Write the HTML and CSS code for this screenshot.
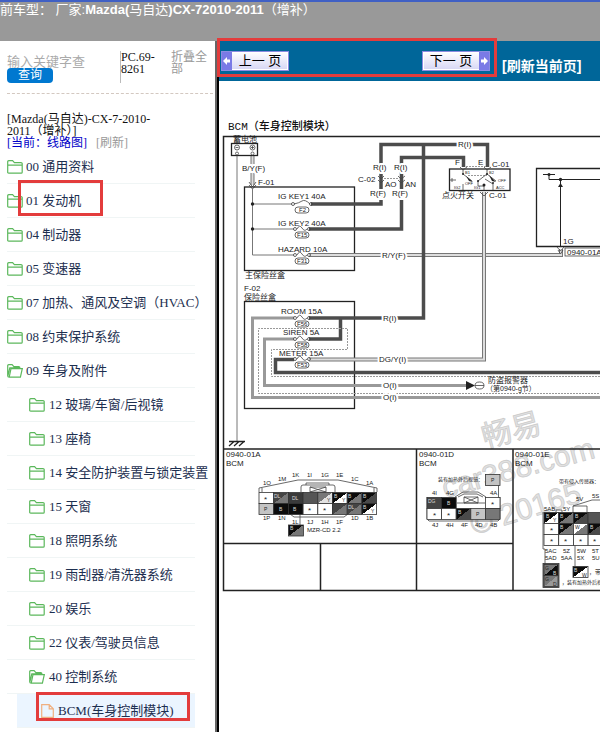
FILE: index.html
```html
<!DOCTYPE html>
<html lang="zh-CN">
<head>
    <meta charset="UTF-8">
    <title>线路图</title>
    <link rel="stylesheet" href="styles.css">
</head>
<body>
<svg class="defs" width="0" height="0">
    <symbol id="folder" viewBox="0 0 16 14">
        <path d="M.7 12.2V1.7Q.7.7 1.7.7H5.6L7.4 2.6H14Q15.2 2.6 15.2 3.6V12.2Q15.2 13.2 14.2 13.2H1.7Q.7 13.2.7 12.2ZM.7 5.1H15.2"/>
    </symbol>
    <symbol id="folder-open" viewBox="0 0 16 14">
        <path d="M2.2 13.2Q.7 13.2.7 11.8V1.7Q.7.7 1.7.7H5.1L6.9 2.6H12Q13 2.6 13 4.6M2.2 13.2L4 4.7H15.3L13.4 13.2ZM1 11.5L2.8 3.8H13"/>
    </symbol>
    <symbol id="file" viewBox="0 0 13 14">
        <path d="M.7.7H8.2L12.3 4.8V13.3H.7ZM8.2.7V4.8H12.3"/>
    </symbol>
</svg>
<header class="top">前车型： 厂家:<b>Mazda(</b>马自达<b>)CX-72010-2011</b>（增补）</header>
<div class="wrap">
    <div class="side">
        <form class="search">
            <div class="search-box">
                <input type="text" class="key" placeholder="输入关键字查" aria-label="关键字">
                <button type="button" class="query">查询</button>
            </div>
            <div class="code">PC.69-8261</div>
            <a href="#" class="fold">折叠全部</a>
        </form>
        <div class="car">
            <p>[Mazda(马自达)-CX-7-2010-2011（增补）]</p>
            <a href="#" class="now">[当前：线路图]</a>
            <a href="#" class="reload">[刷新]</a>
        </div>
        <ul class="tree">
            <li><a href="#"><svg class="ico"><use href="#folder"/></svg>00 通用资料</a></li>
            <li><a href="#" class="mark mark-engine"><svg class="ico"><use href="#folder"/></svg>01 发动机</a></li>
            <li><a href="#"><svg class="ico"><use href="#folder"/></svg>04 制动器</a></li>
            <li><a href="#"><svg class="ico"><use href="#folder"/></svg>05 变速器</a></li>
            <li><a href="#"><svg class="ico"><use href="#folder"/></svg>07 加热、通风及空调（HVAC）</a></li>
            <li><a href="#"><svg class="ico"><use href="#folder"/></svg>08 约束保护系统</a></li>
            <li><a href="#"><svg class="ico"><use href="#folder-open"/></svg>09 车身及附件</a>
                <ul class="sub">
                    <li><a href="#"><svg class="ico"><use href="#folder"/></svg>12 玻璃/车窗/后视镜</a></li>
                    <li><a href="#"><svg class="ico"><use href="#folder"/></svg>13 座椅</a></li>
                    <li><a href="#"><svg class="ico"><use href="#folder"/></svg>14 安全防护装置与锁定装置</a></li>
                    <li><a href="#"><svg class="ico"><use href="#folder"/></svg>15 天窗</a></li>
                    <li><a href="#"><svg class="ico"><use href="#folder"/></svg>18 照明系统</a></li>
                    <li><a href="#"><svg class="ico"><use href="#folder"/></svg>19 雨刮器/清洗器系统</a></li>
                    <li><a href="#"><svg class="ico"><use href="#folder"/></svg>20 娱乐</a></li>
                    <li><a href="#"><svg class="ico"><use href="#folder"/></svg>22 仪表/驾驶员信息</a></li>
                    <li><a href="#"><svg class="ico"><use href="#folder-open"/></svg>40 控制系统</a>
                        <ul class="leaf">
                            <li><a href="#" class="mark mark-bcm"><svg class="ico ico-file"><use href="#file"/></svg>BCM(车身控制模块)</a></li>
                        </ul>
                    </li>
                </ul>
            </li>
        </ul>
    </div>
    <div class="main">
        <div class="bar">
            <div class="pager mark">
                <button type="button" class="page prev"><svg class="arrow" viewBox="0 0 10 18"><path d="M1 9L5 5V7.500H8V10.500H5V13Z"/></svg><span>上一 页</span></button>
                <button type="button" class="page next"><span>下一 页</span><svg class="arrow" viewBox="0 0 10 18"><path d="M9 9L5 5V7.500H2V10.500H5V13Z"/></svg></button>
            </div>
            <a href="#" class="refresh">[刷新当前页]</a>
        </div>
        <h1 class="title">BCM（车身控制模块）</h1>
        <svg class="diagram" width="700" height="590" viewBox="219 134 700 590">
            <defs>
                <linearGradient id="bw" x2="1" y2="1"><stop offset=".5" stop-color="#0c0c0c"/><stop offset=".5" stop-color="#fff"/></linearGradient>
                <linearGradient id="bg" x2="1" y2="1"><stop offset=".5" stop-color="#0c0c0c"/><stop offset=".5" stop-color="#777"/></linearGradient>
                <linearGradient id="bd" x2="1" y2="1"><stop offset=".5" stop-color="#0c0c0c"/><stop offset=".5" stop-color="#4a4a4a"/></linearGradient>
                <linearGradient id="dg" x2="1" y2="1"><stop offset=".5" stop-color="#444"/><stop offset=".5" stop-color="#777"/></linearGradient>
                <linearGradient id="gb" x2="1" y2="1"><stop offset=".5" stop-color="#777"/><stop offset=".5" stop-color="#0c0c0c"/></linearGradient>
                <linearGradient id="gg" x2="1" y2="1"><stop offset=".5" stop-color="#777"/><stop offset=".5" stop-color="#999"/></linearGradient>
                <linearGradient id="gw" x2="1" y2="1"><stop offset=".5" stop-color="#777"/><stop offset=".5" stop-color="#e2e2e2"/></linearGradient>
                <linearGradient id="wg" x2="1" y2="1"><stop offset=".5" stop-color="#fff"/><stop offset=".5" stop-color="#777"/></linearGradient>
                <g id="fuse"><path d="M-8 0Q-3 -1 0 -3T8 0"/><circle cx="-9" r="1.5"/><circle cx="9" r="1.5"/><rect x="-7" y="3" width="14" height="6" rx="3"/></g>
                <g id="fuse-s"><path d="M-5 0Q-2.500 -5 0 -1T5 0"/><circle cx="-7" r="1.500"/><circle cx="7" r="1.500"/><rect x="-7" y="3" width="14" height="6" rx="3"/></g>
            </defs>

            <!-- watermark -->
            <g class="water">
                <text transform="translate(485 448) rotate(-15)">畅易</text>
                <text transform="translate(445 498) rotate(-15)">car388.com</text>
                <text transform="translate(474 535) rotate(-17)">© 20165</text>
            </g>

            <!-- frame and table -->
            <path class="frame" d="M920 136.500H223.500V590.500H920M223.500 449H920M223.500 543.500H513M320.500 543.500V590.500M416.500 449V590.500M513 449V590.500"/>

            <!-- battery -->
            <text class="t8" x="233" y="142">蓄电池</text>
            <path class="thin" d="M237 155V441"/>
            <path class="dbl" d="M252.500 155V185"/><path class="dbl-in" d="M252.500 155V185"/>
            <g class="box"><rect x="231.500" y="143.500" width="26" height="12"/></g>
            <g class="fine"><circle cx="237" cy="147.500" r="2.500"/><circle cx="252.500" cy="147.500" r="2.500"/><circle cx="237" cy="153.500" r="1.500"/><circle cx="252.500" cy="153.500" r="1.500"/>
                <path d="M235.500 147.500H238.500M251 147.500H254M252.500 146V149M249 182L252.500 187L256 182M249 185L252.500 189L256 185"/></g>
            <path class="ground" d="M229 441.500H245M234 441.500L229 446M239 441.500L234 446M244 441.500L239 446"/>
            <text class="t8 gap" x="242" y="171">B/Y(F)</text>
            <text class="t8" x="258" y="185">F-01</text>

            <!-- main fuse box -->
            <g class="box"><rect x="244.500" y="187" width="110" height="83.500"/><rect x="244.500" y="301.500" width="110" height="107"/></g>
            <path class="thin" d="M252.500 187V255H294M252.500 204H292M252.500 229H294"/>
            <circle cx="252.500" cy="204" r="1.700"/><circle cx="252.500" cy="229" r="1.700"/>
            <path class="thick" d="M311 204H381V144.500H487.500V167M309 229H401.500V157.500H463.500V167"/>
            <path class="dbl" d="M309 255H561V249"/><path class="dbl-in" d="M309 255H561V249"/>
            <g class="fine"><use href="#fuse" x="302" y="204"/><use href="#fuse-s" x="302" y="229"/><use href="#fuse-s" x="302" y="255"/></g>
            <text class="t8" x="278" y="199">IG KEY1 40A</text>
            <text class="t8" x="278" y="226">IG KEY2 40A</text>
            <text class="t8" x="278" y="252">HAZARD 10A</text>
            <text class="t6" x="299" y="212">F2</text><text class="t6" x="297" y="237">F15</text><text class="t6" x="297" y="263">F31</text>
            <text class="t8" x="245" y="278">主保险丝盒</text>
            <path class="dash" d="M384 178.500H399"/>
            <g class="fine"><path d="M378 176L381 179L384 176M378 180L381 183L384 180M398 176L401 179L405 176M398 180L401 183L405 180"/></g>
            <text class="t8" x="358" y="182">C-02</text>
            <text class="t8 gap" x="373" y="170">R(I)</text><text class="t8 gap" x="394" y="170">R(I)</text>
            <text class="t8 gap" x="370" y="196">R(F)</text><text class="t8 gap" x="392" y="196">R(F)</text>
            <text class="t8" x="385" y="187">AO</text><text class="t8" x="405" y="187">AN</text>
            <text class="t8 gap" x="382" y="258">R/Y(F)</text>
            <text class="t8 gap" x="458" y="147">R(I)</text>

            <!-- lower fuse box -->
            <text class="t8" x="244" y="291">F-02</text>
            <text class="t8" x="244" y="300">保险丝盒</text>
            <path class="grey" d="M294 318H252.500V397.500H920M294 339H264.500V385.500H468"/>
            <path class="thick" d="M309 318H423.500V144.500M309 339H340.500V318M294 359.500H275.500V372.500H920"/>
            <path class="dbl" d="M309 359.500H484V192"/><path class="dbl-in" d="M309 359.500H484V192"/>
            <path class="dash" d="M920 393.500H258.500V328.500H347.500V349.500H271.500V376.500H920"/>
            <g class="fine"><use href="#fuse-s" x="302" y="318"/><use href="#fuse-s" x="302" y="339"/><use href="#fuse-s" x="302" y="359"/></g>
            <text class="t8" x="281" y="314">ROOM 15A</text>
            <text class="t8" x="283" y="335">SIREN 5A</text>
            <text class="t8" x="279" y="356">METER 15A</text>
            <text class="t6" x="297" y="326">F56</text><text class="t6" x="297" y="347">F58</text><text class="t6" x="297" y="367">F53</text>
            <text class="t8 gap" x="383" y="321">R(I)</text>
            <text class="t8 gap" x="379" y="362">DG/Y(I)</text>
            <text class="t8 gap" x="383" y="388">O(I)</text>
            <text class="t8 gap" x="383" y="400">O(I)</text>
            <path d="M466 381V390L475 385.500Z"/>
            <g class="fine"><ellipse cx="479.500" cy="385.500" rx="4.500" ry="3.500"/><path d="M475 385.500H484"/></g>
            <text class="t8" x="488" y="383">防盗报警器</text>
            <text class="t7" x="486" y="391">（第0940-g节）</text>

            <!-- ignition switch -->
            <g class="box"><rect x="449.500" y="169" width="60.500" height="21.500"/></g>
            <path class="dash" d="M466 166.500H486M468 175.500H487"/>
            <g class="fine"><path d="M463 169V174L472 181M487 169V174L496 181M463 190V184M487 174L478 181V186H484V190M485 179L493 184V190M450 180H456M460 167L463 170L467 167M484 167L487 170L491 167M480 192L484 196L488 192M452 178V182"/></g>
            <path d="M466 176L473 182L469 181ZM489 175L496 182L492 181Z"/><circle cx="463" cy="174" r="1"/><circle cx="487" cy="174" r="1"/><circle cx="484" cy="185" r="1.500"/><circle cx="478" cy="181" r="1"/><circle cx="493" cy="183" r="1"/>
            <text class="t4" x="465" y="174">B1</text><text class="t4" x="489" y="174">B2</text><text class="t4" x="465" y="185">OFF</text><text class="t4" x="498" y="182">OFF</text><text class="t4" x="454" y="189">IG2</text><text class="t4" x="474" y="189">IG1</text><text class="t4" x="496" y="189">ACC</text>
            <text class="t8" x="455" y="165">F</text><text class="t8" x="478" y="165">E</text>
            <text class="t8" x="492" y="167">C-01</text><text class="t8" x="489" y="198">C-01</text>
            <text class="t8" x="442" y="198">点火开关</text>

            <!-- bcm unit -->
            <g class="box"><path d="M920 168.500H536.500V246.500H920"/></g>
            <path class="wire" d="M543 174.500H555M549 174.500V179.500H920M560.500 179.500V246"/>
            <circle cx="549" cy="174.500" r="1.500"/><circle cx="560.500" cy="179.500" r="1.700"/><path d="M558 187H563L560.500 183Z"/>
            <g class="fine"><path d="M557 247L560.500 251L564 247M558 250L560.500 254L563 250"/><rect x="565" y="248" width="40" height="8"/></g>
            <text class="t8" x="563" y="244">1G</text>
            <text class="t8" x="567" y="255">0940-01A</text>

            <!-- connector 0940-01A -->
            <text class="t8" x="226" y="457">0940-01A</text><text class="t8" x="226" y="466">BCM</text>
            <g class="fine">
                <path d="M259 492V488L298 480H338L377 488V492M262 492V488M374 492V488M290 514L294 517H344L348 514M300 508V525M301 492V487Q301 485 303 485H333Q335 485 335 487V492M306 485V483H329V485M310 487H326V492H310ZM310 487L326 492M326 487L310 492"/>
            </g>
            <g class="cells">
                <rect x="259" y="492.500" width="14.700" height="11" fill="#fff"/><rect x="273.700" y="492.500" width="14.700" height="11" fill="url(#dg)"/><rect x="288.400" y="492.500" width="14.700" height="11" fill="#3a3a3a"/><rect x="303.100" y="492.500" width="14.700" height="11" fill="#555"/><rect x="317.800" y="492.500" width="14.700" height="11" fill="url(#gw)"/><rect x="332.500" y="492.500" width="14.700" height="11" fill="url(#bw)"/><rect x="347.200" y="492.500" width="14.700" height="11" fill="url(#bg)"/><rect x="361.900" y="492.500" width="14.700" height="11" fill="url(#bd)"/>
                <rect x="259" y="503.500" width="14.700" height="11" fill="#c4c4c4"/><rect x="273.700" y="503.500" width="14.700" height="11" fill="#0c0c0c"/><rect x="288.400" y="503.500" width="14.700" height="11" fill="#0c0c0c"/><rect x="303.100" y="503.500" width="14.700" height="11" fill="#fff"/><rect x="317.800" y="503.500" width="14.700" height="11" fill="#fff"/><rect x="332.500" y="503.500" width="14.700" height="11" fill="url(#dg)"/><rect x="347.200" y="503.500" width="14.700" height="11" fill="url(#dg)"/><rect x="361.900" y="503.500" width="14.700" height="11" fill="url(#bw)"/>
                <rect x="288.500" y="525" width="15" height="11" fill="url(#bg)"/>
            </g>
            <text class="t8" x="264" y="502">*</text><text class="t8" x="308" y="513">*</text><text class="t8" x="323" y="513">*</text>
            <text class="t5" x="264" y="511">P</text><text class="t5" x="327" y="502">Y</text><text class="t5" x="342" y="502">Y</text><text class="t5" x="371" y="513">Y</text>
            <g class="inv"><text class="t5" x="274" y="498">DL</text><text class="t5" x="292" y="500">DL</text><text class="t5" x="279" y="511">B</text><text class="t5" x="293" y="511">B</text><text class="t5" x="334" y="498">B</text><text class="t5" x="348" y="498">B</text><text class="t5" x="363" y="498">B</text><text class="t5" x="348" y="509">DL</text><text class="t5" x="363" y="509">B</text><text class="t5" x="290" y="530">B</text></g>
            <text class="t6" x="263" y="485">1O</text><text class="t6" x="278" y="481">1M</text><text class="t6" x="292" y="477">1K</text><text class="t6" x="307" y="477">1I</text><text class="t6" x="321" y="477">1G</text><text class="t6" x="336" y="477">1E</text><text class="t6" x="351" y="481">1C</text><text class="t6" x="366" y="485">1A</text>
            <text class="t6" x="263" y="520">1P</text><text class="t6" x="278" y="520">1N</text><text class="t6" x="292" y="524">1L</text><text class="t6" x="307" y="524">1J</text><text class="t6" x="321" y="524">1H</text><text class="t6" x="336" y="524">1F</text><text class="t6" x="351" y="520">1D</text><text class="t6" x="366" y="520">1B</text>
            <text class="t6" x="307" y="532">MZR-CD 2.2</text>

            <!-- connector 0940-01D -->
            <text class="t8" x="419" y="457">0940-01D</text><text class="t8" x="419" y="466">BCM</text>
            <text class="t5" x="438" y="481">装有加热外后视镜：</text>
            <g class="fine"><path d="M427 497V519L429 521H498L500 519V497M455 497L463 492H478L486 497M458 497L464 494H477L483 497M457 503H485M464 497H478V503H464ZM464 497L478 503M478 497L464 503M498.500 485V503"/></g>
            <g class="cells">
                <rect x="427" y="497.500" width="14.600" height="11" fill="#444"/><rect x="441.600" y="497.500" width="14.600" height="11" fill="#0c0c0c"/><rect x="485.400" y="497.500" width="14.600" height="11" fill="#fff"/>
                <rect x="427" y="508.500" width="14.600" height="11" fill="#fff"/><rect x="441.600" y="508.500" width="14.600" height="11" fill="#fff"/><rect x="456.200" y="508.500" width="14.600" height="11" fill="url(#bd)"/><rect x="470.800" y="508.500" width="14.600" height="11" fill="#c4c4c4"/><rect x="485.400" y="508.500" width="14.600" height="11" fill="#777"/>
                <rect x="485.400" y="474.500" width="14.600" height="11" fill="#c4c4c4"/>
            </g>
            <text class="t8" x="491" y="507">*</text><text class="t8" x="433" y="518">*</text><text class="t8" x="447" y="518">*</text><text class="t5" x="476" y="516">P</text><text class="t5" x="491" y="482">P</text>
            <g class="inv"><text class="t5" x="428" y="503">DG</text><text class="t5" x="447" y="505">B</text><text class="t5" x="458" y="514">B</text></g>
            <text class="t6" x="432" y="495">4I</text><text class="t6" x="446" y="495">4G</text><text class="t6" x="490" y="495">4A</text>
            <text class="t6" x="432" y="527">4J</text><text class="t6" x="446" y="527">4H</text><text class="t6" x="461" y="527">4F</text><text class="t6" x="475" y="527">4D</text><text class="t6" x="490" y="527">4B</text>

            <!-- connector 0940-01E -->
            <text class="t8" x="515" y="457">0940-01E</text><text class="t8" x="515" y="466">BCM</text>
            <text class="t5" x="559" y="483">带有侵入传感器：</text>
            <g class="fine"><path d="M543 512V549H545V564M556 512V510H562V512M573 512V506L592 500H620M587 512V506H573M575 540V566"/></g>
            <g class="cells">
                <rect x="544" y="512.500" width="14.700" height="11" fill="url(#bw)"/><rect x="558.700" y="512.500" width="14.700" height="11" fill="url(#bg)"/><rect x="573.400" y="512.500" width="14.700" height="11" fill="url(#bd)"/><rect x="588.100" y="512.500" width="14.700" height="11" fill="#555"/>
                <rect x="544" y="523.500" width="14.700" height="11" fill="#fff"/><rect x="558.700" y="523.500" width="14.700" height="11" fill="url(#bg)"/><rect x="573.400" y="523.500" width="14.700" height="11" fill="url(#wg)"/><rect x="588.100" y="523.500" width="14.700" height="11" fill="url(#bd)"/>
                <rect x="544" y="534.500" width="14.700" height="11" fill="#fff"/><rect x="558.700" y="534.500" width="14.700" height="11" fill="#fff"/><rect x="573.400" y="534.500" width="14.700" height="11" fill="#fff"/><rect x="588.100" y="534.500" width="14.700" height="11" fill="#fff"/>
                <rect x="543" y="563.500" width="16" height="24" fill="#777"/><rect x="544" y="564.500" width="14" height="11" fill="url(#gb)"/><rect x="544" y="575.500" width="14" height="11" fill="url(#gg)"/>
                <rect x="573" y="566.500" width="15" height="11" fill="url(#bw)"/>
            </g>
            <text class="t8" x="550" y="533">*</text><text class="t8" x="550" y="544">*</text><text class="t8" x="564" y="544">*</text><text class="t8" x="579" y="544">*</text><text class="t8" x="593" y="544">*</text>
            <text class="t5" x="553" y="522">Y</text><text class="t5" x="575" y="529">W</text><text class="t5" x="582" y="577">W</text><text class="t5" x="545" y="570">G</text><text class="t5" x="545" y="581">G</text><text class="t5" x="553" y="586">D</text>
            <g class="inv"><text class="t5" x="546" y="518">B</text><text class="t5" x="560" y="518">B</text><text class="t5" x="575" y="518">B</text><text class="t5" x="560" y="529">B</text><text class="t5" x="590" y="529">B</text><text class="t5" x="574" y="572">B</text><text class="t5" x="553" y="575">B</text></g>
            <text class="t6" x="544" y="511">5AB</text><text class="t6" x="563" y="511">5Y</text><text class="t6" x="576" y="501">5V</text><text class="t6" x="592" y="498">5S</text>
            <text class="t6" x="545" y="553">5AC</text><text class="t6" x="563" y="553">5Z</text><text class="t6" x="577" y="553">5W</text><text class="t6" x="592" y="553">5T</text>
            <text class="t6" x="545" y="560">5AD</text><text class="t6" x="561" y="560">5AA</text><text class="t6" x="577" y="560">5X</text><text class="t6" x="592" y="560">5U</text>
            <text class="t6" x="589" y="574">，带有</text>
            <text class="t5" x="562" y="584">，装有加热外后视镜</text>
        </svg>
    </div>
</div>
</body>
</html>
```
FILE: styles.css
```css
*, *::after {
    margin: 0;
    padding: 0;
    box-sizing: border-box;
}
body {
    min-height: 100vh;
    display: flex;
    flex-direction: column;
    background: #fff;
    font: 12px/12px "Liberation Serif", "Noto Sans CJK SC", serif;
    color: #111;
    overflow-x: hidden;
}
a {
    color: inherit;
    text-decoration: none;
}
ul {
    list-style: none;
}
.defs {
    position: absolute;
}

/* 顶部 */
.top {
    height: 41px;
    border-top: 2px solid #4060c4;
    background: #999;
    color: #fff;
    font: 13px/16px "Liberation Sans", "Noto Sans CJK SC", sans-serif;
    white-space: nowrap;
}
.wrap {
    flex: 1;
    display: flex;
}

/* 左侧目录 */
.side {
    flex: none;
    width: 217px;
    padding: 10px 2px 0 7px;
    border-right: 2px solid #666;
}
.search {
    display: flex;
    height: 43px;
    border-bottom: 1px dashed #d3c8c0;
}
.search-box {
    width: 114px;
    height: 32px;
    border-right: 1px solid #bbb;
}
.key {
    display: block;
    width: 100px;
    height: 17px;
    padding-top: 4px;
    border: 0;
    background: none;
    font: 13px/13px "Liberation Sans", "Noto Sans CJK SC", sans-serif;
}
.key::placeholder {
    color: #aaa;
}
.query {
    display: block;
    width: 46px;
    height: 15px;
    border: 0;
    border-radius: 4px;
    background: #0078d0;
    color: #fff;
    font: 12px/15px "Liberation Sans", "Noto Sans CJK SC", sans-serif;
}
.code {
    width: 50px;
}
.fold {
    width: 38px;
}
.reload, .fold {
    color: #999;
}
.car {
    padding: 19px 56px 0 0;
    height: 56px;
}
.now {
    margin-right: 6px;
    color: #0000c8;
}
.tree {
    width: 188px;
    font-size: 13px;
    white-space: nowrap;
}
.tree a {
    display: flex;
    align-items: center;
    gap: 3px;
    height: 34px;
    border-bottom: 1px solid #f0f5f5;
    color: #1d2f50;
}
.sub a {
    padding-left: 22px;
    gap: 4px;
}
.leaf {
    padding-left: 10px;
    background: #fff;
}
.leaf a {
    padding-left: 24px;
    background: #ebf5ff;
}
.ico {
    flex: none;
    width: 16px;
    height: 14px;
    fill: none;
    stroke: #5cb85c;
    stroke-width: 1.2;
}
.ico-file {
    width: 13px;
    stroke: #f0b080;
}

/* 红色标注框 */
.mark {
    position: relative;
}
.mark::after {
    content: "";
    position: absolute;
    border: 3px solid #e33c3c;
    pointer-events: none;
}
.mark-engine::after {
    left: 11px;
    top: -4px;
    width: 85px;
    height: 36px;
}
.mark-bcm::after {
    left: 19px;
    top: -2px;
    width: 154px;
    height: 29px;
}
.pager::after {
    inset: -3px 0 4px -2px;
}

/* 右侧内容 */
.main {
    flex: 1;
    min-width: 0;
    border-left: 2px solid #000;
}
.bar {
    display: flex;
    height: 40px;
    background: #069;
}
.pager {
    display: flex;
    justify-content: space-between;
    align-items: flex-start;
    width: 278px;
    padding: 10px 7px 0 2px;
}
.page {
    display: flex;
    align-items: center;
    height: 20px;
    width: 68px;
    border: 1px solid #8c8ce0;
    background: linear-gradient(#fff, #d6d6f4);
    box-shadow: inset 0 0 0 1px #fff;
    font: 13px/18px "Liberation Sans", "Noto Sans CJK SC", sans-serif;
    color: #000;
}
.page span {
    flex: 1;
    text-align: center;
}
.arrow {
    width: 10px;
    height: 18px;
    background: #7a7ae6;
    fill: #fff;
}
.refresh {
    padding: 16px 0 0 5px;
    color: #fff;
    font: bold 14px/18px "Liberation Sans", "Noto Sans CJK SC", sans-serif;
    white-space: nowrap;
}
.title {
    height: 53px;
    padding: 40px 0 0 9px;
    font: 500 11px/13px "Liberation Mono", "Noto Sans CJK SC", monospace;
    white-space: nowrap;
}

/* 线路图 */
.diagram {
    display: block;
    font-family: "Liberation Sans", "Noto Sans CJK SC", sans-serif;
    fill: #222;
}
.frame, .box, .fine, .thin, .wire, .thick, .grey, .dash, .dbl, .dbl-in, .ground {
    fill: none;
    stroke: #222;
}
.frame {
    stroke-width: 1.5;
}
.box, .ground {
    stroke-width: 1.3;
}
.fine {
    stroke: #444;
    stroke-width: .8;
}
.fine circle, .fine rect {
    fill: #fff;
    fill-opacity: .6;
}
.thin {
    stroke: #777;
}
.thick {
    stroke: #4c4c4c;
    stroke-width: 3.5;
}
.grey {
    stroke: #999;
    stroke-width: 3;
}
.dbl {
    stroke: #777;
    stroke-width: 4;
}
.dbl-in {
    stroke: #ddd;
    stroke-width: 2;
}
.dash {
    stroke: #999;
    stroke-dasharray: 2 1;
}
.cells {
    stroke: #333;
    stroke-width: .8;
}
.inv {
    fill: #ddd;
}
.t8 {
    font-size: 8px;
}
.t7 {
    font-size: 7px;
}
.t6 {
    font-size: 6px;
}
.t5 {
    font-size: 5px;
}
.t4 {
    font-size: 4px;
}
.gap {
    paint-order: stroke;
    stroke: #fff;
    stroke-width: 4;
}
.water {
    font-size: 30px;
    fill: #e2e2e2;
    stroke: #ccc;
    stroke-width: .8;
}
```
